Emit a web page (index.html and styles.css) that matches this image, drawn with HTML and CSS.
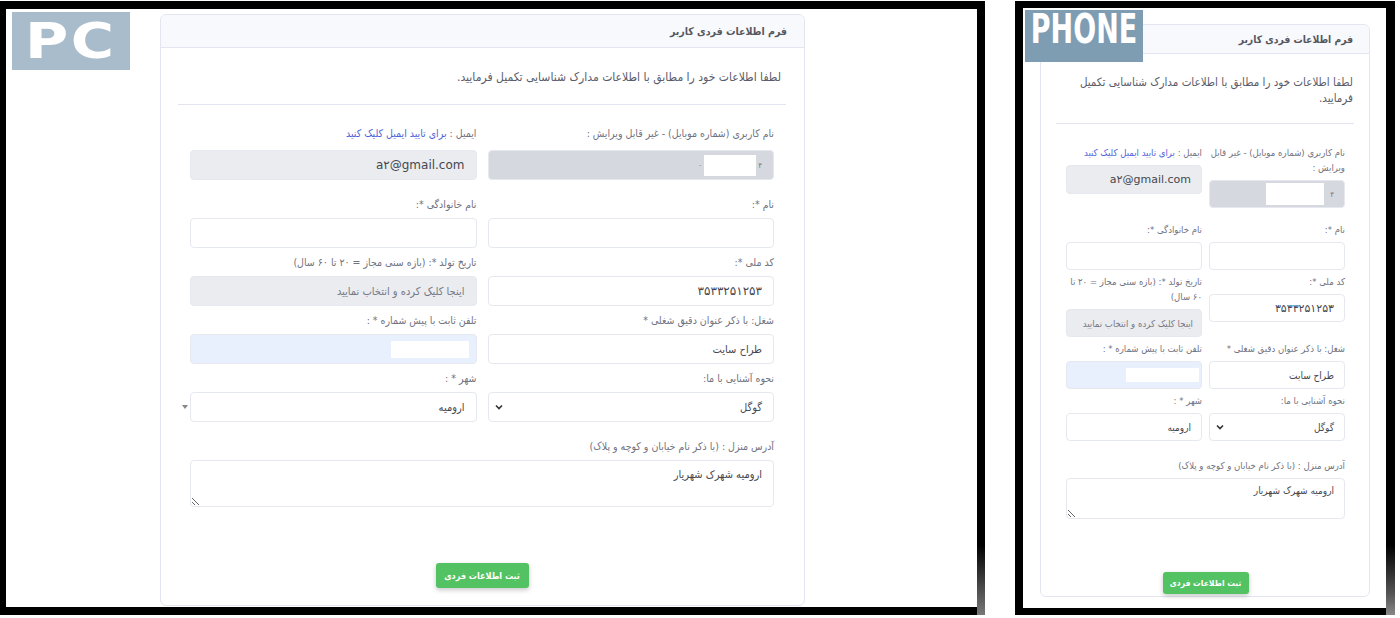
FILE: index.html
```html
<!DOCTYPE html>
<html lang="fa">
<head>
<meta charset="utf-8">
<title>فرم اطلاعات فردی کاربر</title>
<link rel="stylesheet" href="styles.css">
</head>
<body>
<div class="frame frame-pc">
  <div class="tag tag-pc"><span class="tag-text">PC</span></div>
  <div class="card card-pc" dir="rtl">
    <div class="card-header"><h6 class="card-title">فرم اطلاعات فردی کاربر</h6></div>
    <div class="card-body">
      <p class="lead">لطفا اطلاعات خود را مطابق با اطلاعات مدارک شناسایی تکمیل فرمایید.</p>
      <hr class="sep">
      <form class="form">
        <div class="grid">
          <div class="field first">
            <label>نام کاربری (شماره موبایل) - غیر قابل ویرایش :</label>
            <div class="ctl locked"><span class="tiny">۴</span><span class="mask"></span><span class="tiny">۰</span></div>
          </div>
          <div class="field first">
            <label>ایمیل : <a href="#" class="link">برای تایید ایمیل کلیک کنید</a></label>
            <div class="ctl readonly latin"><span dir="ltr">a۲@gmail.com</span></div>
          </div>
          <div class="field">
            <label>نام *:</label>
            <div class="ctl"></div>
          </div>
          <div class="field">
            <label>نام خانوادگی *:</label>
            <div class="ctl"></div>
          </div>
          <div class="field">
            <label>کد ملی *:</label>
            <div class="ctl latin">۳۵۳۳۲۵۱۲۵۳</div>
          </div>
          <div class="field">
            <label>تاریخ تولد *: (بازه سنی مجاز = ۲۰ تا ۶۰ سال)</label>
            <div class="ctl readonly muted">اینجا کلیک کرده و انتخاب نمایید</div>
          </div>
          <div class="field">
            <label>شغل: با ذکر عنوان دقیق شغلی *</label>
            <div class="ctl">طراح سایت</div>
          </div>
          <div class="field">
            <label>تلفن ثابت با پیش شماره * :</label>
            <div class="ctl autofill"><span class="mask mask-wide"></span></div>
          </div>
          <div class="field">
            <label>نحوه آشنایی با ما:</label>
            <div class="ctl select">گوگل<svg class="chev" viewBox="0 0 8 6" width="8" height="6"><path d="M1 1.5 L4 4.5 L7 1.5" fill="none" stroke="#333" stroke-width="1.6"/></svg></div>
          </div>
          <div class="field city">
            <label>شهر * :</label>
            <div class="ctl">ارومیه</div>
            <span class="caret-out"></span>
          </div>
        </div>
        <div class="field wide">
          <label>آدرس منزل : (با ذکر نام خیابان و کوچه و پلاک)</label>
          <textarea class="ctl area">ارومیه شهرک شهریار</textarea>
        </div>
        <div class="actions"><button type="button" class="btn">ثبت اطلاعات فردی</button></div>
      </form>
    </div>
  </div>
</div>

<div class="frame frame-phone">
  <div class="card card-phone" dir="rtl">
    <div class="card-header"><h6 class="card-title">فرم اطلاعات فردی کاربر</h6></div>
    <div class="card-body">
      <p class="lead">لطفا اطلاعات خود را مطابق با اطلاعات مدارک شناسایی تکمیل فرمایید.</p>
      <hr class="sep">
      <form class="form">
        <div class="grid">
          <div class="field first">
            <label>نام کاربری (شماره موبایل) - غیر قابل ویرایش :</label>
            <div class="ctl locked"><span class="tiny">۴</span><span class="mask"></span></div>
          </div>
          <div class="field first">
            <label class="nowrap">ایمیل : <a href="#" class="link">برای تایید ایمیل کلیک کنید</a></label>
            <div class="ctl readonly email latin"><span dir="ltr">a۲@gmail.com</span></div>
          </div>
          <div class="field">
            <label>نام *:</label>
            <div class="ctl"></div>
          </div>
          <div class="field">
            <label>نام خانوادگی *:</label>
            <div class="ctl"></div>
          </div>
          <div class="field">
            <label>کد ملی *:</label>
            <div class="ctl latin">۳۵۳۳۲۵۱۲۵۳</div>
          </div>
          <div class="field">
            <label>تاریخ تولد *: (بازه سنی مجاز = ۲۰ تا ۶۰ سال)</label>
            <div class="ctl readonly muted nowrap">اینجا کلیک کرده و انتخاب نمایید</div>
          </div>
          <div class="field">
            <label>شغل: با ذکر عنوان دقیق شغلی *</label>
            <div class="ctl">طراح سایت</div>
          </div>
          <div class="field">
            <label>تلفن ثابت با پیش شماره * :</label>
            <div class="ctl autofill"><span class="mask mask-wide"></span></div>
          </div>
          <div class="field">
            <label>نحوه آشنایی با ما:</label>
            <div class="ctl select">گوگل<svg class="chev" viewBox="0 0 8 6" width="8" height="6"><path d="M1 1.5 L4 4.5 L7 1.5" fill="none" stroke="#333" stroke-width="1.6"/></svg></div>
          </div>
          <div class="field">
            <label>شهر * :</label>
            <div class="ctl">ارومیه</div>
          </div>
        </div>
        <div class="field wide">
          <label>آدرس منزل : (با ذکر نام خیابان و کوچه و پلاک)</label>
          <textarea class="ctl area">ارومیه شهرک شهریار</textarea>
        </div>
        <div class="actions"><button type="button" class="btn">ثبت اطلاعات فردی</button></div>
      </form>
    </div>
  </div>
  <div class="tag tag-phone"><span class="tag-text">PHONE</span></div>
</div>
</body>
</html>
```

FILE: styles.css
```css
* { box-sizing: border-box; }

body {
  margin: 0;
  padding-top: 1px;
  background: #fff;
  display: flex;
  gap: 30px;
  font-family: "DejaVu Sans Condensed", "DejaVu Sans", sans-serif;
  font-stretch: condensed;
  color: #5a5c69;
}

.frame {
  height: 614px;
  border: solid #000;
  background: #fff;
  position: relative;
}

.frame::after {
  content: "";
  position: absolute;
  pointer-events: none;
}

.frame-pc {
  width: 985px;
  border-width: 8px 8px 8px 6px;
  display: flex;
  align-items: flex-start;
}

.frame-pc::after {
  right: -8px;
  bottom: -8px;
  width: 8px;
  height: 70px;
  background: linear-gradient(to bottom, #000, #555 70%, #777);
}

.frame-phone {
  width: 380px;
  border-width: 7px 9px 7px 8px;
}

.frame-phone::after {
  right: -9px;
  bottom: -7px;
  width: 9px;
  height: 70px;
  background: linear-gradient(to bottom, #000, #555 70%, #888);
}

.tag {
  display: flex;
  justify-content: center;
  align-items: flex-start;
  color: #fff;
  font-weight: bold;
}

.tag-text { display: block; flex: none; }

.tag-pc {
  width: 118px;
  height: 58px;
  margin: 3px 0 0 6px;
  background: #a9bccb;
  font-family: "DejaVu Sans", sans-serif;
  font-stretch: normal;
  font-size: 50px;
  line-height: 58px;
}

.tag-pc .tag-text { transform: scaleX(1.18); letter-spacing: 2px; }

.tag-phone {
  position: absolute;
  left: 2px;
  top: 2px;
  width: 118px;
  height: 52px;
  background: #7e9cb2;
  font-family: "DejaVu Sans Condensed", "DejaVu Sans", sans-serif;
  font-stretch: condensed;
  font-size: 30px;
  line-height: 34px;
}

.tag-phone .tag-text {
  transform: translateY(-4px) scaleY(1.37);
  transform-origin: top center;
}

/* card */
.card {
  background: #fff;
  border: 1px solid #e3e6f0;
  border-radius: 6px;
}

.card-header {
  background: #f8f9fc;
  border-bottom: 1px solid #e3e6f0;
  border-radius: 6px 6px 0 0;
}

.card-title {
  margin: 0;
  font-weight: bold;
  color: #55575f;
}

.lead { margin: 0; color: #5a5c69; }

.sep {
  margin: 0;
  border: 0;
  border-top: 1px solid #e3e6f0;
}

.grid {
  display: grid;
  grid-template-columns: 1fr 1fr;
  align-items: start;
}

.field {
  display: flex;
  flex-direction: column;
  position: relative;
}

.field label { color: #707280; }
.nowrap { white-space: nowrap; }

.link { color: #4e63d9; text-decoration: none; }

.ctl {
  display: flex;
  align-items: center;
  background: #fff;
  border: 1px solid #e6e8ef;
  border-radius: 4px;
  color: #45474f;
  font-family: "DejaVu Sans Condensed", "DejaVu Sans", sans-serif;
}

.latin {
  font-family: "DejaVu Sans", sans-serif;
  font-stretch: normal;
}

.readonly { background: #eaecf0; }
.locked { background: #d5d8de; }
.autofill { background: #e8f0fe; }
.muted { color: #767884; }

.mask { background: #fff; flex: none; }
.tiny { font-size: 8px; color: #777; }

.select { justify-content: space-between; }

.caret-out {
  position: absolute;
  left: -8px;
  bottom: 13px;
  width: 0;
  height: 0;
  border-left: 3px solid transparent;
  border-right: 3px solid transparent;
  border-top: 4px solid #888;
}

.area {
  display: block;
  resize: vertical;
  width: 100%;
}

.actions { display: flex; justify-content: center; }

.btn {
  background: #52c262;
  color: #fff;
  border: 0;
  border-radius: 3px;
  font-family: "DejaVu Sans Condensed", "DejaVu Sans", sans-serif;
  font-stretch: condensed;
  font-weight: bold;
  padding: 0;
  box-shadow: 0 2px 5px rgba(0, 0, 0, 0.22);
}

/* ---------- PC ---------- */
.card-pc {
  width: 645px;
  height: 592px;
  margin: 5px 0 0 30px;
}

.card-pc .card-header { height: 33px; padding-right: 17px; }
.card-pc .card-title { font-size: 10.5px; line-height: 32px; }
.card-pc .card-body { padding: 19px 18px 0 17px; }
.card-pc .lead { font-size: 12px; line-height: 20px; padding-right: 5px; margin-bottom: 17px; }
.card-pc .form { padding: 19px 12px 0; }
.card-pc .grid { column-gap: 11px; row-gap: 5px; }
.card-pc .field label { font-size: 10.5px; line-height: 18px; margin-bottom: 5px; }
.card-pc .field.first label { margin-bottom: 8px; }
.card-pc .field.first { margin-bottom: 10px; }
.card-pc .ctl { height: 30px; padding: 0 11px; font-size: 11px; }
.card-pc .ctl.latin { font-size: 12px; }
.card-pc .locked .mask { width: 52px; height: 21px; margin: 0 2px; }
.card-pc .autofill { padding-right: 7px; }
.card-pc .mask-wide { width: 78px; height: 17px; }
.card-pc .select { padding-left: 6px; }
.card-pc .wide { margin-top: 15px; }
.card-pc .area { height: 47px; padding: 7px 11px; font-size: 11px; }
.card-pc .actions { margin-top: 56px; }
.card-pc .btn { height: 25px; width: 93px; font-size: 9px; }

/* ---------- PHONE ---------- */
.card-phone {
  width: 330px;
  height: 573px;
  margin: 16px 0 0 17px;
}

.card-phone .card-header { height: 29px; padding-right: 16px; }
.card-phone .card-title { font-size: 10.25px; line-height: 28px; }
.card-phone .card-body { padding: 20px 15px 0 15px; }
.card-phone .lead { font-size: 11.5px; line-height: 16px; padding-right: 1px; margin-bottom: 17px; }
.card-phone .form { padding: 21px 9px 0 10px; }
.card-phone .grid { column-gap: 7px; row-gap: 4px; }
.card-phone .field label { font-size: 9.5px; line-height: 15px; margin-bottom: 5px; }
.card-phone .field.first { margin-bottom: 10px; }
.card-phone .ctl { height: 28px; padding: 0 10px; font-size: 10px; }
.card-phone .ctl.muted { padding: 0 8px; font-size: 9.5px; }
.card-phone .ctl.latin { font-size: 11px; }
.card-phone .email { height: 29px; }
.card-phone .locked .mask { width: 58px; height: 22px; margin-right: 6px; }
.card-phone .autofill { padding-right: 2px; }
.card-phone .mask-wide { width: 73px; height: 14px; }
.card-phone .select { padding-left: 6px; }
.card-phone .wide { margin-top: 17px; }
.card-phone .area { height: 41px; padding: 6px 10px; font-size: 10px; }
.card-phone .actions { margin-top: 53px; }
.card-phone .btn { height: 22px; width: 86px; font-size: 8.5px; }
```
